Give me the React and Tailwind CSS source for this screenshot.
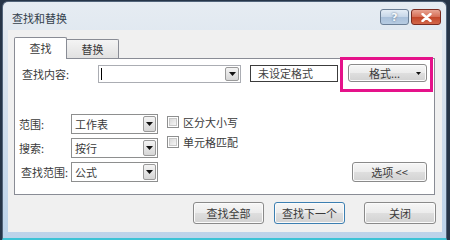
const F = "font-['Noto_Sans_CJK_SC','Noto_Sans',sans-serif]";

const btnBase =
  "flex items-center justify-center rounded-[3px] border bg-[linear-gradient(to_bottom,#f6f6f6_0%,#ececec_48%,#dedede_52%,#d2d2d2_100%)] text-[11px] leading-none text-[#3a3a3a] shadow-[inset_0_0_0_1px_#fbfbfb]";

function Arrow() {
  return (
    <svg width="7" height="4" viewBox="0 0 7 4">
      <path d="M0 0h7L3.5 4z" fill="#111" />
    </svg>
  );
}

function DropBtn({ w = "w-[14px]" }) {
  return (
    <div className={`${w} self-stretch m-[1px] flex items-center justify-center rounded-[2px] border border-[#9a9a9a] bg-[linear-gradient(to_bottom,#f4f4f4,#d6d6d6)]`}>
      <Arrow />
    </div>
  );
}

function Select({ text }) {
  return (
    <div className="w-[87px] h-[20px] flex border border-[#8e8f8f] bg-white">
      <div className="flex-1 flex items-center pl-[3px] text-[11px] text-[#3a3a3a]">{text}</div>
      <DropBtn w="w-[13px]" />
    </div>
  );
}

function Check({ label }) {
  return (
    <div className="flex items-center h-[18px]">
      <div className="w-[12px] h-[12px] border border-[#8e8f8f] bg-white p-[1px]">
        <div className="w-full h-full bg-[linear-gradient(135deg,#d8d8d8,#f6f6f6)] border border-[#c8c8c8]" />
      </div>
      <span className="ml-[4px] text-[11px] text-[#3a3a3a]">{label}</span>
    </div>
  );
}

export default function App() {
  return (
    <div className={`w-[450px] h-[240px] bg-[#263548] flex ${F}`}>
      <div className="mt-[1px] ml-[2px] mr-[3px] flex-1 flex flex-col rounded-t-[6px] border border-[#52647a] border-b-2 border-b-[#3cc3d6] bg-[linear-gradient(to_bottom,#e6ecf2_0%,#d6e1ed_40%,#bcd3ea_100%)]">
        {/* title bar */}
        <div className="h-[28px] flex items-start">
          <div className="ml-[9px] mt-[9px] text-[11px] leading-[14px] text-[#33404c]">查找和替换</div>
          <div className="ml-auto mt-[7px] mr-[5px] flex gap-[2px]">
            <div className="w-[29px] h-[16px] rounded-[3px] border border-[#6b7f96] bg-[linear-gradient(to_bottom,#e4edf6_0%,#c6d6e8_50%,#a9c0da_52%,#b7cce2_100%)] flex items-center justify-center text-[11px] font-bold text-[#f4f8fc] [text-shadow:0_0_2px_#4a5f78] leading-none font-['DejaVu_Sans',sans-serif]">
              ?
            </div>
            <div className="w-[30px] h-[16px] rounded-[3px] border border-[#7a2b20] bg-[linear-gradient(to_bottom,#e8a493_0%,#d66f57_48%,#c2462a_52%,#d2674a_100%)] flex items-center justify-center">
              <svg width="11" height="9" viewBox="0 0 11 9">
                <path d="M1.5 1l8 7M9.5 1l-8 7" stroke="#fff" strokeWidth="2.4" strokeLinecap="round" />
              </svg>
            </div>
          </div>
        </div>
        {/* client */}
        <div className="ml-[5px] mr-[4px] h-[202px] bg-[#f0f0f0] flex flex-col">
          {/* tabs */}
          <div className="pt-[7px] pl-[6px] flex items-end">
            <div className="relative z-10 -mb-[1px] w-[53px] h-[22px] border border-b-0 border-[#898c95] bg-white rounded-t-[2px] flex items-center justify-center text-[11px] text-[#3a3a3a]">
              <span className="-mt-[1px]">查找</span>
            </div>
            <div className="w-[52px] h-[19px] border border-l-0 border-b-0 border-[#898c95] rounded-tr-[2px] bg-[linear-gradient(to_bottom,#f4f4f4,#e1e1e1)] flex items-center justify-center text-[11px] text-[#3a3a3a]">
              替换
            </div>
          </div>
          {/* panel */}
          <div className="relative ml-[6px] w-[421px] h-[137px] border border-[#898c95] bg-white flex flex-col">
            {/* row 1 */}
            <div className="pt-[6px] pl-[7px] flex items-start">
              <div className="w-[76px] h-[18px] flex items-center text-[11px] text-[#3a3a3a]">查找内容:</div>
              <div className="w-[143px] h-[18px] flex border border-[#abadb3] bg-white">
                <div className="flex-1 flex items-center pl-[2px]">
                  <div className="w-[1px] h-[12px] bg-black" />
                </div>
                <DropBtn />
              </div>
              <div className="ml-[9px] w-[88px] h-[17px] border border-[#3c3c3c] bg-white flex items-center pl-[7px] text-[11px] text-[#444]">
                未设定格式
              </div>
              <div className={`${btnBase} border-[#8a8a8a] ml-[10px] -mt-[1px] w-[79px] h-[18px] relative`}>
                <span className="-ml-[6px]">格式...</span>
                <div className="absolute right-[5px] top-[7px]">
                  <svg width="5" height="3" viewBox="0 0 5 3"><path d="M0 0h5L2.5 3z" fill="#111" /></svg>
                </div>
              </div>
            </div>
            {/* section 2 */}
            <div className="mt-[31px] pl-[4px] pr-[7px] flex items-start">
              <div className="flex flex-col gap-[4px]">
                <div className="flex items-center">
                  <div className="w-[52px] text-[11px] text-[#3a3a3a]">范围:</div>
                  <Select text="工作表" />
                </div>
                <div className="flex items-center">
                  <div className="w-[52px] text-[11px] text-[#3a3a3a]">搜索:</div>
                  <Select text="按行" />
                </div>
                <div className="flex items-center">
                  <div className="w-[52px] pl-[2px] text-[11px] text-[#3a3a3a]">查找范围:</div>
                  <Select text="公式" />
                </div>
              </div>
              <div className="ml-[9px] mt-[-1px] flex flex-col gap-[2px]">
                <Check label="区分大小写" />
                <Check label="单元格匹配" />
              </div>
              <div className={`${btnBase} border-[#8a8a8a] ml-auto self-end w-[75px] h-[20px]`}>
                选项 &lt;&lt;
              </div>
            </div>
            {/* magenta highlight */}
            <div className="absolute left-[325px] top-[-2px] w-[93px] h-[35px] border-[3px] border-[#e5128a]" />
          </div>
          {/* bottom buttons */}
          <div className="mt-[7px] flex justify-end pr-[6px]">
            <div className={`${btnBase} border-[#8a8a8a] w-[71px] h-[22px]`}>查找全部</div>
            <div className={`${btnBase} ml-[10px] border-[#3c7fb1] shadow-[inset_0_0_0_1px_#bfe4f7] w-[71px] h-[22px]`}>查找下一个</div>
            <div className={`${btnBase} ml-[19px] border-[#8a8a8a] w-[72px] h-[22px]`}>关闭</div>
          </div>
        </div>
      </div>
    </div>
  );
}
